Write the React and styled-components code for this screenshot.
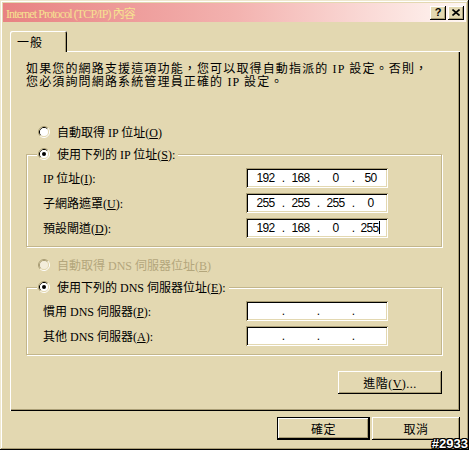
import React from "react";
import styled, { createGlobalStyle } from "styled-components";

const face = "#e3d8b1";
const shadow = "#aa9e76";
const disabledText = "#b3a67c";
const uiFont = `"Liberation Serif", "Noto Sans CJK TC", serif`;

const GlobalStyle = createGlobalStyle`
  html, body {
    margin: 0;
    padding: 0;
    background: ${face};
  }
  body {
    font-family: ${uiFont};
    font-size: 12px;
    color: #000;
  }
`;

const Window = styled.div`
  position: relative;
  width: 469px;
  height: 450px;
  box-sizing: border-box;
  padding: 3px;
  background: ${face};
  box-shadow: inset -1px -1px 0 #000, inset 1px 1px 0 #efe8cf,
    inset -2px -2px 0 ${shadow}, inset 2px 2px 0 #fff;
  display: flex;
  flex-direction: column;
`;

const TitleBar = styled.div`
  height: 19px;
  display: flex;
  align-items: center;
  justify-content: space-between;
  padding: 0 2px 0 3px;
  background: linear-gradient(to right, #e88282 0%, #f3b2af 50%, #fff7f3 100%);
`;

const Title = styled.span`
  color: #f6e190;
  font-size: 12px;
  letter-spacing: -0.9px;
  white-space: nowrap;
`;

const CaptionButtons = styled.div`
  display: flex;
  gap: 2px;
`;

const CaptionButton = styled.div`
  width: 16px;
  height: 14px;
  box-sizing: border-box;
  display: flex;
  align-items: center;
  justify-content: center;
  background: ${face};
  box-shadow: inset -1px -1px 0 #000, inset 1px 1px 0 #fff,
    inset -2px -2px 0 ${shadow}, inset 2px 2px 0 ${face};
  font: bold 11px "Liberation Sans", sans-serif;
  line-height: 14px;
  padding-bottom: 1px;
`;

const Body = styled.div`
  flex: 1;
  padding: 9px 6px 0 7px;
  display: flex;
  flex-direction: column;
`;

const TabStrip = styled.div`
  display: flex;
`;

const Tab = styled.div`
  position: relative;
  z-index: 1;
  width: 57px;
  height: 21px;
  box-sizing: border-box;
  margin-bottom: -1px;
  padding-left: 7px;
  display: flex;
  align-items: center;
  background: ${face};
  border-top-left-radius: 2px;
  border-top-right-radius: 2px;
  box-shadow: inset 1px 1px 0 #fff, inset -1px 0 0 #000, inset -2px 0 0 ${shadow};
  font-family: "Noto Sans CJK TC", sans-serif;
  letter-spacing: 1px;
`;

const TabPanel = styled.div`
  height: 360px;
  box-sizing: border-box;
  padding: 12px 18px 0 16px;
  box-shadow: inset 1px 1px 0 #fff, inset -1px -1px 0 #000,
    inset -2px -2px 0 ${shadow};
  display: flex;
  flex-direction: column;
`;

const Description = styled.p`
  margin: 0 0 32px;
  line-height: 13px;
  letter-spacing: 1.15px;
  white-space: nowrap;
`;

const RadioRow = styled.div`
  height: 22px;
  display: flex;
  align-items: center;
  gap: 7px;
  padding-left: ${(p) => p.$indent || 0}px;
  margin-top: ${(p) => p.$gap || 0}px;
  color: ${(p) => (p.$disabled ? disabledText : "#000")};
  white-space: nowrap;
`;

const GroupBox = styled.fieldset`
  margin: 0;
  padding: 3px 0 ${(p) => p.$bottom}px 10px;
  border: 1px solid #c3b68c;
  box-shadow: inset 1px 1px 0 #fff, 1px 1px 0 #fff;
  display: flex;
  flex-direction: column;
  gap: 5px;
`;

const Legend = styled.legend`
  padding: 0 3px 0 1px;
  background: ${face};
`;

const FieldRow = styled.div`
  display: grid;
  grid-template-columns: 1fr 142px;
  align-items: center;
  height: 20px;
  padding: 0 53px 0 6px;
  white-space: nowrap;
`;

const IpBox = styled.div`
  height: 20px;
  box-sizing: border-box;
  padding: 0 2px 0 4px;
  display: flex;
  align-items: center;
  background: #fff;
  box-shadow: inset 1px 1px 0 ${shadow}, inset -1px -1px 0 #fff,
    inset 2px 2px 0 #000, inset -2px -2px 0 ${face};
  font-family: "Liberation Sans", sans-serif;
  font-size: 12px;
  letter-spacing: -0.7px;
`;

const Octet = styled.span`
  flex: 1;
  text-align: center;
`;

const Dot = styled.span`
  width: 4px;
  text-align: center;
`;

const Caret = styled.span`
  display: inline-block;
  width: 1px;
  height: 13px;
  margin-left: 1px;
  background: #000;
  vertical-align: -2px;
`;

const ActionRow = styled.div`
  display: flex;
  justify-content: flex-end;
  margin-top: ${(p) => p.$gap}px;
  gap: 2px;
`;

const Button = styled.button`
  width: ${(p) => p.$width}px;
  height: 23px;
  padding: 0;
  border: none;
  background: ${face};
  font-family: ${uiFont};
  font-size: 12px;
  color: #000;
  letter-spacing: 0.5px;
  box-shadow: ${(p) =>
    p.$default
      ? `inset 0 0 0 1px #000, inset -2px -2px 0 #000, inset 2px 2px 0 #fff, inset -3px -3px 0 ${shadow}`
      : `inset -1px -1px 0 #000, inset 1px 1px 0 #fff, inset -2px -2px 0 ${shadow}, inset 2px 2px 0 ${face}`};
`;

const Watermark = styled.span`
  position: absolute;
  right: 1px;
  bottom: 0;
  font: bold 13px "Liberation Sans", sans-serif;
  line-height: 13px;
  color: #fff;
  text-shadow: -1px 0 #000, 1px 0 #000, 0 -1px #000, 0 1px #000,
    -1px -1px #000, 1px 1px #000, -1px 1px #000, 1px -1px #000;
`;

function RadioMark({ checked, disabled }) {
  return (
    <svg width="12" height="12" viewBox="0 0 12 12">
      <path d="M2.11 9.89A5.5 5.5 0 0 1 9.89 2.11" stroke={shadow} fill="none" />
      <path d="M9.89 2.11A5.5 5.5 0 0 1 2.11 9.89" stroke="#fff" fill="none" />
      <path d="M2.82 9.18A4.5 4.5 0 0 1 9.18 2.82" stroke={disabled ? shadow : "#000"} fill="none" />
      <path d="M9.18 2.82A4.5 4.5 0 0 1 2.82 9.18" stroke={face} fill="none" />
      <circle cx="6" cy="6" r="4" fill={disabled ? "#f3eddb" : "#fff"} />
      {checked && <circle cx="6" cy="6" r="2" fill="#000" />}
    </svg>
  );
}

function IpField({ value, caret }) {
  const parts = value || ["", "", "", ""];
  return (
    <IpBox>
      {parts.map((p, i) => (
        <React.Fragment key={i}>
          {i > 0 && <Dot>.</Dot>}
          <Octet>
            {p}
            {caret && i === 3 && <Caret />}
          </Octet>
        </React.Fragment>
      ))}
    </IpBox>
  );
}

const ipRows = [
  { label: ["IP 位址(", "I", "):"], value: ["192", "168", "0", "50"] },
  { label: ["子網路遮罩(", "U", "):"], value: ["255", "255", "255", "0"] },
  { label: ["預設閘道(", "D", "):"], value: ["192", "168", "0", "255"], caret: true },
];

const dnsRows = [
  { label: ["慣用 DNS 伺服器(", "P", "):"] },
  { label: ["其他 DNS 伺服器(", "A", "):"] },
];

function Label({ parts }) {
  return (
    <span>
      {parts[0]}
      <u>{parts[1]}</u>
      {parts[2]}
    </span>
  );
}

export default function App() {
  return (
    <>
      <GlobalStyle />
      <Window>
        <TitleBar>
          <Title>Internet Protocol (TCP/IP) 內容</Title>
          <CaptionButtons>
            <CaptionButton>?</CaptionButton>
            <CaptionButton>
              <svg width="8" height="7" viewBox="0 0 8 7">
                <path d="M0.5 0.5L7.5 6.5M7.5 0.5L0.5 6.5" stroke="#000" strokeWidth="1.6" />
              </svg>
            </CaptionButton>
          </CaptionButtons>
        </TitleBar>

        <Body>
          <TabStrip>
            <Tab>一般</Tab>
          </TabStrip>
          <TabPanel>
            <Description>
              如果您的網路支援這項功能，您可以取得自動指派的 IP 設定。否則，
              <br />
              您必須詢問網路系統管理員正確的 IP 設定。
            </Description>

            <RadioRow $indent={12}>
              <RadioMark />
              <span>
                自動取得 IP 位址(<u>O</u>)
              </span>
            </RadioRow>
            <GroupBox $bottom={8}>
              <Legend>
                <RadioRow>
                  <RadioMark checked />
                  <span>
                    使用下列的 IP 位址(<u>S</u>):
                  </span>
                </RadioRow>
              </Legend>
              {ipRows.map((r) => (
                <FieldRow key={r.label[1]}>
                  <Label parts={r.label} />
                  <IpField value={r.value} caret={r.caret} />
                </FieldRow>
              ))}
            </GroupBox>

            <RadioRow $indent={12} $gap={7} $disabled>
              <RadioMark disabled />
              <span>
                自動取得 DNS 伺服器位址(<u>B</u>)
              </span>
            </RadioRow>
            <GroupBox $bottom={8}>
              <Legend>
                <RadioRow>
                  <RadioMark checked />
                  <span>
                    使用下列的 DNS 伺服器位址(<u>E</u>):
                  </span>
                </RadioRow>
              </Legend>
              {dnsRows.map((r) => (
                <FieldRow key={r.label[1]}>
                  <Label parts={r.label} />
                  <IpField />
                </FieldRow>
              ))}
            </GroupBox>

            <ActionRow $gap={16}>
              <Button $width={104}>
                進階(<u>V</u>)...
              </Button>
            </ActionRow>
          </TabPanel>

          <ActionRow $gap={6}>
            <Button $width={93} $default>
              確定
            </Button>
            <Button $width={88}>取消</Button>
          </ActionRow>
        </Body>
        <Watermark>#2933</Watermark>
      </Window>
    </>
  );
}
